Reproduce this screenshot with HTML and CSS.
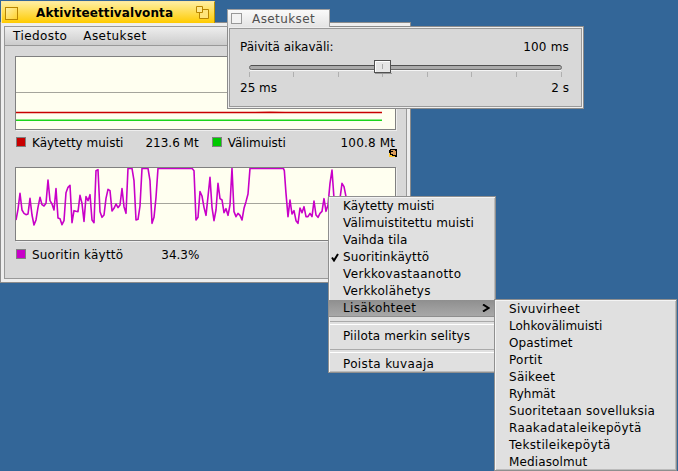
FILE: index.html
```html
<!DOCTYPE html>
<html lang="fi">
<head>
<meta charset="utf-8">
<title>Aktiviteettivalvonta</title>
<link rel="stylesheet" href="styles.css">
</head>
<body>
<main class="desktop">
  <section class="window monitor">
    <header class="tab tab-active">
      <span class="close"></span>
      <h1 class="title"><span>Aktiviteettivalvonta</span></h1>
      <svg class="zoom" width="14" height="14" viewBox="0 0 14 14"><path d="M3.500 3.500h9v9h-9z" fill="#ffe47a" stroke="#b98500"/><path d="M.5.500h6v6h-6z" fill="#ffe98f" stroke="#b98500"/></svg>
    </header>
    <div class="frame"><div class="content">
      <nav class="menubar"><span class="m1">Tiedosto</span><span class="m2">Asetukset</span></nav>
      <div class="views">
        <svg class="graph" width="381" height="74" viewBox="16 57 379 72">
          <path class="mid" d="M16 92.500H395"/>
          <path class="red" d="M16 112.500H255L270 112.200L285 112.500H382"/>
          <path class="green" d="M16 120.300H382"/>
        </svg>
        <div class="legend first"><i class="swatch sr"></i><span class="name">Käytetty muisti</span><span class="value v1">213.6 Mt</span><i class="swatch sg"></i><span class="name n2">Välimuisti</span><span class="value v2">100.8 Mt</span></div>
        <svg class="graph" width="381" height="74" viewBox="16 168 379 72">
          <path class="mid" d="M16 203.500H395"/>
          <g transform="translate(0 160) scale(.33333)"><path class="cpu" d="M48 180L54 148L60 100L66 150L72 160L78 164L84 162L90 115L96 165L102 195L108 180L114 142L120 112L126 134L132 138L138 130L144 60L150 122L156 132L162 150L168 86L174 174L180 176L186 194L192 182L198 98L204 82L210 76L216 188L222 152L228 154L234 155L240 106L246 130L252 184L258 110L264 122L270 104L276 180L282 188L288 32L294 29L300 155L306 172L312 165L318 115L324 88L330 92L336 153L342 145L348 132L354 143L360 135L366 86L372 140L378 160L384 25L396 25L402 62L408 180L414 178L420 138L426 25L444 25L450 62L456 190L462 172L468 112L474 25L576 25L582 32L588 180L594 172L600 95L606 108L612 142L618 166L624 110L630 52L636 142L642 182L648 150L654 70L660 116L666 120L672 158L678 146L684 166L690 135L696 25L702 155L708 170L714 160L720 166L726 180L732 145L738 125L744 102L750 25L850 25L853 32L858 100L864 170L870 120L876 162L882 152L888 182L894 190L900 144L906 158L912 140L918 170L924 170L930 160L936 170L942 123L948 165L954 172L960 160L966 154L972 116L978 154L984 135L990 70L996 30L1002 115L1020 115L1026 70L1032 80L1038 110"/></g>
        </svg>
        <div class="legend second"><i class="swatch sm"></i><span class="name n3">Suoritin käyttö</span><span class="value v3">34.3%</span></div>
      </div>
    </div></div>
    <svg class="replicant" width="8" height="8" viewBox="0 0 8 8" shape-rendering="crispEdges"><path d="M1 0h7v8H5V7H0V1h1z" fill="#000"/><path d="M2 1h4v1h1v4H4V5H2V3h2V2H2z" fill="#d99a58"/><path d="M0 4h1v2h2v1h3v1H0z" fill="#ffc52b"/></svg>
  </section>

  <section class="window settings">
    <header class="tab"><span class="close"></span><h2 class="title"><span>Asetukset</span></h2></header>
    <div class="frame"><div class="content">
      <div class="row"><span class="interval">Päivitä aikaväli:</span><span class="now">100 ms</span></div>
      <svg class="slider" width="316" height="20" viewBox="248 59 316 20">
        <rect x="249.500" y="65.500" width="312" height="4" rx="2" fill="#aaa" stroke="#686868"/>
        <path d="M251 65.500h309" stroke="#505050"/><path d="M250 70.500h311" stroke="#f5f5f5"/>
        <path d="M249.500 72v5M293.500 72v5M338.500 72v5M382.500 72v5M427.500 72v5M471.500 72v5M516.500 72v5M561.500 72v5" stroke="#b0b0b0"/>
        <path d="M375 73.500h17" stroke="#999"/><rect x="374.500" y="60.500" width="16" height="12" fill="#e6e6e6" stroke="#505050"/>
        <path d="M375.500 72V61.500H390" fill="none" stroke="#fff"/><path d="M382.500 64v5" stroke="#aaa"/>
      </svg>
      <div class="row"><span class="min">25 ms</span><span class="max">2 s</span></div>
    </div></div>
  </section>

  <ul class="menu context">
    <li><span>Käytetty muisti</span></li>
    <li><span class="track-s">Välimuistitettu muisti</span></li>
    <li><span class="track-s">Vaihda tila</span></li>
    <li><svg class="check" width="8" height="9" viewBox="0 0 8 9"><path d="M1 4.500L3 7.500L7 1" fill="none" stroke="#000" stroke-width="2"/></svg><span class="track-s">Suoritinkäyttö</span></li>
    <li><span class="track-l">Verkkovastaanotto</span></li>
    <li><span class="track-m">Verkkolähetys</span></li>
    <li class="selected"><span class="track-l">Lisäkohteet</span><svg class="arrow" width="8" height="8" viewBox="0 0 8 8"><path d="M1 .5L6.500 4L1 7.500" fill="none" stroke="#000" stroke-width="2"/></svg></li>
    <li class="separator"></li>
    <li><span class="track-s">Piilota merkin selitys</span></li>
    <li class="separator"></li>
    <li><span class="track-l">Poista kuvaaja</span></li>
  </ul>
  <ul class="menu sub">
    <li><span class="track-m">Sivuvirheet</span></li>
    <li><span>Lohkovälimuisti</span></li>
    <li><span class="track-s">Opastimet</span></li>
    <li><span class="track-m">Portit</span></li>
    <li><span class="track-m">Säikeet</span></li>
    <li><span>Ryhmät</span></li>
    <li><span class="track-m">Suoritetaan sovelluksia</span></li>
    <li><span class="track-l">Raakadataleikepöytä</span></li>
    <li><span class="track-l">Tekstileikepöytä</span></li>
    <li><span class="track-s">Mediasolmut</span></li>
  </ul>
</main>
</body>
</html>
```
FILE: styles.css
```css
* { box-sizing: border-box; }
body { margin: 0; font: 12px/17px "DejaVu Sans", sans-serif; color: #000; }
h1, h2, ul { margin: 0; padding: 0; font-size: 12px; font-weight: normal; list-style: none; }
svg { display: block; flex: none; }
.desktop { position: relative; width: 678px; height: 471px; overflow: hidden; background: #336698; }
.window { position: absolute; }
.monitor { left: 0; top: 1px; width: 411px; }
.settings { left: 227px; top: 9px; width: 357px; }

.tab { display: flex; align-items: center; position: relative; z-index: 1; border: 1px solid #a0a0a0; border-bottom: 0; background: linear-gradient(#fafafa, #e4e4e4); color: #505050; }
.tab-active { width: 214px; height: 22px; margin-left: 1px; padding: 1px 4px 0 3px; border: 1px solid #ffe79c; border-right-color: #bd9200; border-bottom: 0; background: linear-gradient(#ffee9f, #ffcb00); color: #000; }
.close { width: 13px; height: 13px; border: 1px solid #b98500; background: linear-gradient(135deg, #fff0a5, #ffd22d); }
.tab-active .title { flex: 1; padding: 1px 0 0 18px; font-weight: bold; letter-spacing: .1px; }
.settings .tab { width: 103px; height: 18px; padding-left: 3px; }
.settings .close { width: 11px; height: 11px; border-color: #999; background: #f3f3f3; }
.settings .title { padding: 1px 0 0 10px; letter-spacing: .42px; }

.frame { border: 1px solid #8c8c8c; padding: 1px; background: #eee; }
.content { border: 1px solid #999; background: #d8d8d8; }
.monitor .frame { height: 261px; margin-top: -1px; padding: 3px; }
.monitor .content { height: 253px; }
.menubar { display: flex; height: 19px; padding: 1px 0 0 8px; border-bottom: 1px solid #999; background: linear-gradient(#eee, #ccc); letter-spacing: .42px; }
.m2 { margin-left: 16px; }
.views { padding: 10px; }
.graph { border: 1px solid #808080; background: #fffff0; box-shadow: 1px 1px #eee; }
.graph path { fill: none; }
.graph .mid { stroke: #a5a59c; }
.red { stroke: #c80000; stroke-width: 1.6; }
.green { stroke: #1bd51b; stroke-width: 1.6; }
.cpu { stroke: #c800c8; stroke-width: 4.8; stroke-linejoin: round; }
.legend { display: flex; align-items: flex-start; height: 17px; }
.first { margin: 4px 0 16px; }
.second { margin-top: 5px; }
.swatch { width: 10px; height: 10px; margin: 3px 0 0 1px; border: 1px solid #808080; }
.sr { background: #c80000; }
.sg { margin-left: 13px; background: #00c800; }
.sm { background: #c800c8; }
.name { margin-left: 6px; padding-top: 1px; }
.value { padding-top: 1px; }
.n3 { letter-spacing: .2px; }
.v1 { margin-left: 22px; }
.v2 { margin: 0 1px 0 auto; letter-spacing: .15px; }
.v3 { margin-left: 38px; }
.replicant { position: absolute; left: 389px; top: 148px; }

.settings .frame { height: 83px; margin-top: -1px; }
.settings .content { height: 79px; padding: 10px 12px 0 10px; }
.row { display: flex; justify-content: space-between; }
.now { letter-spacing: .2px; }
.slider { margin: 3px 0 1px 8px; }

.menu { position: absolute; padding: 1px; border: 1px solid #8f8f8f; background: #e0e0e0; box-shadow: inset 1px 1px #f4f4f4, inset -1px -1px #bbb; }
.context { left: 328px; top: 196px; width: 168px; height: 177px; }
.sub { left: 494px; top: 299px; width: 183px; height: 172px; }
.menu li { display: flex; align-items: center; position: relative; height: 17px; padding-left: 13px; }
.track-s { letter-spacing: .13px; }
.track-m { letter-spacing: .27px; }
.track-l { letter-spacing: .36px; }
.menu .selected { margin: 0 -1px; padding-left: 14px; border-bottom: 1px solid #8e8e8e; background: linear-gradient(#8f8f8f, #a8a8a8); }
.menu .separator { height: 11px; padding: 0; }
.separator::after { content: ""; width: 100%; height: 2px; border-top: 1px solid #aaa; border-bottom: 1px solid #fff; }
.check { position: absolute; left: 1px; top: 4px; }
.arrow { margin: 0 5px 0 auto; }
```
